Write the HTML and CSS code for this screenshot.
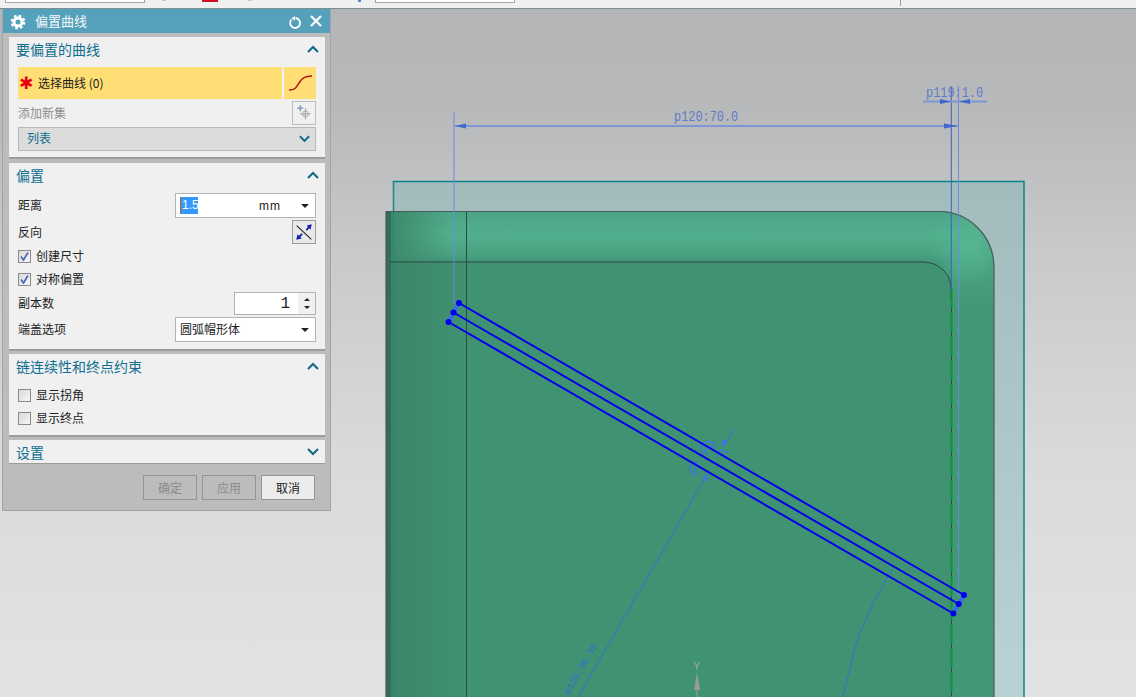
FILE: index.html
```html
<!DOCTYPE html>
<html lang="zh-CN">
<head>
<meta charset="utf-8">
<title>偏置曲线</title>
<link rel="stylesheet" href="styles.css">
</head>
<body>
<div class="app">
  <div class="toolbar">
    <span class="tb-field tb-field-a"></span>
    <span class="tb-speck tb-s1"></span>
    <span class="tb-red"></span>
    <span class="tb-speck tb-s2"></span>
    <span class="tb-blue"></span>
    <span class="tb-field tb-field-b"></span>
    <span class="tb-sep"></span>
  </div>
  <div class="viewport">
    <svg class="scene" viewBox="0 9 1136 688" width="1136" height="688" xmlns="http://www.w3.org/2000/svg">
      <defs>
        <linearGradient id="plateG" x1="0" y1="181" x2="0" y2="697" gradientUnits="userSpaceOnUse">
          <stop offset="0" stop-color="#a2bbbc"/><stop offset="1" stop-color="#b9d3d4"/>
        </linearGradient>
        <linearGradient id="topBand" x1="0" y1="212" x2="0" y2="262" gradientUnits="userSpaceOnUse">
          <stop offset="0" stop-color="#4ba585"/><stop offset=".45" stop-color="#52af8d"/><stop offset=".8" stop-color="#4aa483"/><stop offset="1" stop-color="#41957a"/>
        </linearGradient>
        <linearGradient id="rightBand" x1="0" y1="248" x2="0" y2="305" gradientUnits="userSpaceOnUse">
          <stop offset="0" stop-color="#4ca786"/><stop offset="1" stop-color="#429876"/>
        </linearGradient>
        <linearGradient id="leftCorner" x1="390" y1="0" x2="450" y2="0" gradientUnits="userSpaceOnUse">
          <stop offset="0" stop-color="#3d886b"/><stop offset="1" stop-color="#3d886b" stop-opacity="0"/>
        </linearGradient>
        <linearGradient id="leftBand" x1="390" y1="0" x2="467" y2="0" gradientUnits="userSpaceOnUse">
          <stop offset="0" stop-color="#3b8569"/><stop offset="1" stop-color="#3f9272"/>
        </linearGradient>
        <radialGradient id="cornerGlow" cx="968" cy="246" r="38" gradientUnits="userSpaceOnUse">
          <stop offset="0" stop-color="#56b592"/><stop offset="1" stop-color="#56b592" stop-opacity="0"/>
        </radialGradient>
        <clipPath id="bodyClip"><path d="M386 700V211H939A55 56 0 0 1 994 267V700Z"/></clipPath>
      </defs>

      <rect class="plate" x="393.500" y="181.500" width="630.500" height="530"/>

      <g clip-path="url(#bodyClip)">
        <rect x="386" y="211" width="608" height="490" fill="#429876"/>
        <rect x="386" y="211" width="608" height="51" fill="url(#topBand)"/>
        <rect x="951" y="248" width="43" height="57" fill="url(#rightBand)"/>
        <rect x="390" y="211" width="60" height="51" fill="url(#leftCorner)"/>
        <rect x="930" y="205" width="70" height="90" fill="url(#cornerGlow)"/>
        <rect x="390" y="262" width="77" height="440" fill="url(#leftBand)"/>
        <path d="M467 262H923A28 26 0 0 1 951 288V700H467Z" fill="#3f9272"/>
        <rect x="386" y="211" width="5" height="490" fill="#386b54"/>
      </g>

      <line class="teal" x1="393.500" y1="182" x2="393.500" y2="697"/>
      <path class="edge" d="M386 697V211.500H939A55 56 0 0 1 994 267V697"/>
      <path class="edge-thin" d="M390 262H923A28 26 0 0 1 951 288V300"/>
      <line class="edge-thin" x1="466.500" y1="212" x2="466.500" y2="697"/>
      <line class="edge-dark" x1="951.500" y1="288" x2="951.500" y2="697"/>
      <line class="edge-green" x1="951.500" y1="288" x2="951.500" y2="697"/>

      <line class="ext" x1="454" y1="112" x2="454" y2="304"/>
      <line class="ext ext-dark" x1="951.300" y1="86" x2="951.300" y2="290"/>
      <line class="ext" x1="958.500" y1="86" x2="958.500" y2="596"/>

      <line class="dim" x1="455" y1="126" x2="958" y2="126"/>
      <path class="arrow" d="M455 126L466 123.500V128.500Z"/>
      <path class="arrow" d="M958 126L944 123.500V128.500Z"/>
      <line class="dim" x1="923" y1="101.500" x2="987" y2="101.500"/>
      <path class="arrow" d="M951 101.500L940 99V104Z"/>
      <path class="arrow" d="M959 101.500L970 99V104Z"/>
      <text class="dim-text" transform="translate(674 121) scale(1 1.25)">p120:70.0</text>
      <text class="dim-text" transform="translate(926 97) scale(1 1.25)">p119:1.0</text>

      <line class="leader" x1="734" y1="430" x2="723" y2="447"/>
      <line class="leader" x1="708" y1="473" x2="578" y2="697"/>
      <path class="arrow-b" d="M722 447L722 439 728 442Z"/>
      <path class="arrow-b" d="M708 473L702 478 707 482Z"/>
      <path class="mark" d="M716 444C706 438 697 444 703 455"/>
      <path class="mark" d="M716 448C709 444 703 448 707 455"/>
      <path class="mark" d="M698 462C690 460 687 470 695 476"/>
      <path class="mark" d="M701 466C695 465 693 470 698 473"/>
      <path class="mark" d="M720 450L729 453M720 450L717 457"/>
      <path class="leader" d="M893 568C884 584 876 596 870 610C862 628 856 642 852 660C849 672 846 685 843 697"/>
      <text class="diag-text" transform="translate(569 695) rotate(-60)" x="0" y="0">p120:30.35</text>

      <line class="link" x1="459" y1="303" x2="448.500" y2="322"/>
      <line class="link" x1="964" y1="595" x2="953.300" y2="613.500"/>
      <line class="curve" x1="459" y1="303" x2="964" y2="595"/>
      <line class="curve" x1="453.500" y1="312.500" x2="958.700" y2="604"/>
      <line class="curve" x1="448.500" y1="322" x2="953.300" y2="613.500"/>
      <circle class="dot" cx="459" cy="303" r="3"/>
      <circle class="dot" cx="453.500" cy="312.500" r="3"/>
      <circle class="dot" cx="448.500" cy="322" r="3"/>
      <circle class="dot" cx="964" cy="595" r="3"/>
      <circle class="dot" cx="958.700" cy="604" r="3"/>
      <circle class="dot" cx="953.300" cy="613.500" r="3"/>

      <text class="triad-y" x="693.500" y="670">Y</text>
      <path class="triad" d="M697 672L700 690H694Z"/>
      <line class="triad-line" x1="697" y1="688" x2="697" y2="697"/>
    </svg>

    <section class="dialog">
      <header class="dialog-title">
        <svg class="gear" viewBox="0 0 16 16" width="16" height="16">
          <circle class="gear-ring" cx="8" cy="8" r="4"/>
          <circle class="gear-teeth" cx="8" cy="8" r="6.200"/>
        </svg>
        <span class="dialog-name">偏置曲线</span>
        <svg class="reset" viewBox="0 0 14 14" width="14" height="14">
          <path d="M3.400 3.600A5 5 0 1 0 7.500 2"/>
          <path class="fill-white" d="M7 0L7 4.600 3.400 2.400Z"/>
        </svg>
        <svg class="close" viewBox="0 0 14 14" width="14" height="14">
          <path d="M2 2L12 12M12 2L2 12"/>
        </svg>
      </header>

      <div class="dialog-body">
        <div class="panel panel-curve">
          <div class="panel-head">
            <span>要偏置的曲线</span>
            <svg class="chev" viewBox="0 0 12 8" width="12" height="8"><path d="M1 7L6 2 11 7"/></svg>
          </div>
          <div class="panel-body">
            <div class="pick-row">
              <div class="pick-main"><span class="req">✱</span><span class="lbl">选择曲线 (0)</span></div>
              <div class="pick-icon">
                <svg viewBox="0 0 28 20" width="28" height="20"><path class="s-curve" d="M3 17C9 17 10 15 13 10S19 3 26 3"/></svg>
              </div>
            </div>
            <div class="row row-24 muted">
              <span class="lbl">添加新集</span>
              <button class="icon-btn" type="button">
                <svg viewBox="0 0 24 24" width="22" height="22">
                  <path class="plus" d="M8 3.500V10M4.800 6.800H11.200"/>
                  <circle class="target" cx="13.500" cy="13" r="3.200"/>
                  <path class="target-line" d="M13.500 7V19M7.500 13H19.500"/>
                </svg>
              </button>
            </div>
            <div class="list-select">
              <span class="lbl lbl-list">列表</span>
              <svg class="chev chev-sm" viewBox="0 0 12 8" width="11" height="8"><path d="M1 1L6 6 11 1"/></svg>
            </div>
          </div>
        </div>

        <div class="panel panel-offset">
          <div class="panel-head">
            <span>偏置</span>
            <svg class="chev" viewBox="0 0 12 8" width="12" height="8"><path d="M1 7L6 2 11 7"/></svg>
          </div>
          <div class="panel-body">
            <div class="row row-25">
              <span class="lbl">距离</span>
              <div class="field field-wide">
                <span class="selected">1.5</span>
                <span class="unit">mm</span>
                <span class="tri"></span>
              </div>
            </div>
            <div class="row row-24">
              <span class="lbl">反向</span>
              <button class="icon-btn icon-btn-dark" type="button">
                <svg viewBox="0 0 24 24" width="22" height="22">
                  <path class="rev-line" d="M4 5L20 20"/>
                  <path class="rev-arrow" d="M5 19L10 14M14.500 10L19 5"/>
                  <path class="rev-head" d="M3.500 20.500L5 14.500 9.500 19ZM20.500 3.500L15 5 19 9.500Z"/>
                </svg>
              </button>
            </div>
            <label class="check row-21"><span class="box"><svg viewBox="0 0 11 11" width="11" height="11"><path d="M2 5.500L4.500 9 9 1.500"/></svg></span><span class="lbl">创建尺寸</span></label>
            <label class="check row-21"><span class="box"><svg viewBox="0 0 11 11" width="11" height="11"><path d="M2 5.500L4.500 9 9 1.500"/></svg></span><span class="lbl">对称偏置</span></label>
            <div class="row row-23">
              <span class="lbl">副本数</span>
              <div class="field field-spin">
                <span class="spin-value">1</span>
                <span class="spin"><span class="tri tri-up"></span><span class="tri tri-down"></span></span>
              </div>
            </div>
            <div class="row row-25">
              <span class="lbl">端盖选项</span>
              <div class="field field-wide">
                <span class="field-text lbl">圆弧帽形体</span>
                <span class="tri"></span>
              </div>
            </div>
          </div>
        </div>

        <div class="panel panel-chain">
          <div class="panel-head">
            <span>链连续性和终点约束</span>
            <svg class="chev" viewBox="0 0 12 8" width="12" height="8"><path d="M1 7L6 2 11 7"/></svg>
          </div>
          <div class="panel-body">
            <label class="check row-22"><span class="box"></span><span class="lbl">显示拐角</span></label>
            <label class="check row-20"><span class="box"></span><span class="lbl">显示终点</span></label>
          </div>
        </div>

        <div class="panel panel-settings">
          <div class="panel-head">
            <span>设置</span>
            <svg class="chev" viewBox="0 0 12 8" width="12" height="8"><path d="M1 1L6 6 11 1"/></svg>
          </div>
        </div>

        <footer class="dialog-actions">
          <button class="btn" type="button" disabled><span class="lbl">确定</span></button>
          <button class="btn" type="button" disabled><span class="lbl">应用</span></button>
          <button class="btn btn-on" type="button"><span class="lbl">取消</span></button>
        </footer>
      </div>
    </section>
  </div>
</div>
</body>
</html>
```

FILE: styles.css
```css
* { box-sizing: border-box; }
html, body { margin: 0; height: 100%; overflow: hidden; }
body { font-family: "Noto Sans CJK SC", "Liberation Sans", sans-serif; font-size: 12px; color: #222; }

.app { display: flex; flex-direction: column; width: 1136px; height: 697px; }

.toolbar { flex: 0 0 9px; display: flex; align-items: flex-start; background: #f0f0f0; border-bottom: 1px solid #7d8e8e; overflow: hidden; }
.tb-field { display: block; height: 3px; background: #fff; border: 1px solid #a5a5a5; border-top: 0; }
.tb-field-a { width: 140px; margin-left: 5px; }
.tb-speck { display: block; width: 4px; height: 1px; background: #c8c8c8; }
.tb-s1 { margin-left: 17px; margin-right: 36px; }
.tb-red { display: block; width: 16px; height: 2px; background: #d01020; }
.tb-s2 { margin-left: 30px; margin-right: 80px; }
.tb-blue { display: block; width: 3px; height: 2px; background: #6080d8; margin-left: 26px; margin-right: 14px; }
.tb-field-b { width: 140px; }
.tb-sep { display: block; width: 1px; height: 6px; background: #9a9a9a; margin-left: 385px; }

.viewport { position: relative; flex: 1; background: linear-gradient(#b4b5b7 0%, #b8b9bb 15%, #c8c9ca 35%, #d9dadb 65%, #e2e3e4 100%); overflow: hidden; }
.scene { display: block; position: absolute; left: 0; top: 0; }

.plate { fill: url(#plateG); stroke: #0b8583; stroke-width: 1.500; }
.teal { stroke: #1b8a85; stroke-width: 1; }
.edge { fill: none; stroke: #4a5c56; stroke-width: 1.200; }
.edge-thin { fill: none; stroke: #2c4a40; stroke-width: 1; }
.edge-dark { stroke: #2c4a40; stroke-width: 1; }
.edge-green { stroke: #12923f; stroke-width: 2; stroke-dasharray: 20 4; }
.ext { stroke: #6d8cd8; stroke-width: 1; }
.ext-dark { stroke: #3a62c8; }
.dim { stroke: #7f95d4; stroke-width: 2; }
.arrow { fill: #3f68cc; }
.arrow-b { fill: #3a78e0; }
.dim-text { font-family: "Liberation Mono", monospace; font-size: 11.900px; fill: #5f7cc8; }
.diag-text { font-family: "Liberation Mono", monospace; font-size: 9.500px; fill: #2d6fd8; }
.leader { fill: none; stroke: #2f72d8; stroke-width: 1; }
.mark { fill: none; stroke: #3a78dc; stroke-width: 1.600; }
.curve { stroke: #0000ee; stroke-width: 2; }
.link { stroke: #3a6ce8; stroke-width: 4; }
.dot { fill: #0000f0; }
.triad-y { font-family: "Liberation Sans", sans-serif; font-size: 10px; fill: #a8a8a8; }
.triad { fill: #9a9a9a; }
.triad-line { stroke: #9a9a9a; stroke-width: 1; }

.dialog { position: absolute; left: 2px; top: 0; width: 329px; height: 502px; display: flex; flex-direction: column; background: #bcbcbc; border: 1px solid #a3a3a3; border-top: 0; }
.dialog-title { flex: 0 0 24px; display: flex; align-items: center; background: #55a0bb; color: #fff; padding: 0 7px 0 7px; font-size: 13px; }
.dialog-name { margin-left: 9px; padding-bottom: 2px; flex: 1; color: #f4fafc; }
.gear { display: block; margin-top: 2px; }
.gear-ring { fill: none; stroke: #fff; stroke-width: 3; }
.gear-teeth { fill: none; stroke: #fff; stroke-width: 2.400; stroke-dasharray: 2.600 2.270; }
.reset { display: block; margin-right: 7px; margin-top: 4px; }
.reset path { fill: none; stroke: #fff; stroke-width: 1.800; }
.reset .fill-white { fill: #fff; stroke: none; }
.close { display: block; }
.close path { fill: none; stroke: #fff; stroke-width: 2.200; }

.dialog-body { flex: 1; display: flex; flex-direction: column; gap: 3px; padding: 4px 5px 0 6px; }
.panel { background: #f0f0f0; border-bottom: 2px solid #9c9c9c; overflow: hidden; }
.panel-curve { height: 122px; margin-bottom: 1px; }
.panel-offset { height: 188px; }
.panel-chain { height: 83px; }
.panel-settings { height: 24px; border-bottom-width: 1px; }

.panel-head { height: 26px; display: flex; align-items: center; justify-content: space-between; padding: 0 6px 2px 7px; font-size: 14px; color: #0f6f90; }
.chev { display: block; }
.chev path { fill: none; stroke: #0a6a88; stroke-width: 2; }
.chev-sm { margin-right: 0; }

.panel-body { display: flex; flex-direction: column; gap: 2px; padding: 4px 9px 0; }

.lbl { padding-bottom: 2px; }
.lbl-list { padding-bottom: 3px; }

.pick-row { display: flex; gap: 2px; height: 32px; }
.pick-main { flex: 1; display: flex; align-items: center; background: #ffde75; color: #1c1c1c; }
.req { width: 20px; padding-left: 1px; margin-right: 0; text-align: left; color: #e8000c; font-size: 17px; line-height: 1; font-family: "DejaVu Sans", sans-serif; font-weight: 700; }
.pick-icon { width: 32px; display: flex; align-items: center; justify-content: center; background: #ffde75; }
.s-curve { fill: none; stroke: #b01818; stroke-width: 1.500; }

.row { display: flex; align-items: center; justify-content: space-between; }
.row-20 { height: 20px; }
.row-21 { height: 21px; }
.row-22 { height: 22px; }
.row-23 { height: 23px; }
.row-24 { height: 24px; }
.row-25 { height: 25px; }
.muted { color: #8e8e8e; }

.icon-btn { width: 24px; height: 24px; padding: 0; display: flex; align-items: center; justify-content: center; background: #f0f0f0; border: 1px solid #bdbdbd; }
.icon-btn-dark { background: #e9e9e9; border-color: #9a9a9a; }
.plus { fill: none; stroke: #8c9cc0; stroke-width: 1.800; }
.target { fill: none; stroke: #b89a9a; stroke-width: 1; }
.target-line { fill: none; stroke: #9a9a9a; stroke-width: 1; }
.rev-line { fill: none; stroke: #222; stroke-width: 1.200; }
.rev-arrow { fill: none; stroke: #1020b0; stroke-width: 2; }
.rev-head { fill: #1020b0; }

.list-select { height: 24px; display: flex; align-items: center; justify-content: space-between; padding: 0 5px 0 8px; background: #dcdcdc; border: 1px solid #b8b8b8; color: #0f6f90; }

.field { position: relative; display: flex; align-items: center; background: #fff; border: 1px solid #b3b3b3; height: 100%; }
.field-wide { width: 141px; padding: 0 6px 0 4px; }
.field-spin { width: 82px; }
.selected { background: #3399ff; color: #fff; padding: 0 0 0 1px; height: 17px; line-height: 17px; width: 18px; border-left: 1px solid #c06010; font-family: "Liberation Sans", sans-serif; font-size: 12px; }
.unit { margin-left: auto; margin-right: 20px; letter-spacing: 1px; font-family: "Liberation Sans", sans-serif; font-size: 12px; }
.field-text { flex: 1; }
.tri { display: block; width: 0; height: 0; border-left: 4px solid transparent; border-right: 4px solid transparent; border-top: 4px solid #222; }
.tri-up { border-top: 0; border-bottom: 3px solid #222; border-left-width: 3px; border-right-width: 3px; }
.tri-down { border-top-width: 3px; border-left-width: 3px; border-right-width: 3px; }
.spin-value { flex: 1; text-align: right; padding-right: 8px; font-size: 16px; font-family: "Liberation Mono", monospace; background: #fff; }
.spin { width: 17px; height: 100%; display: flex; flex-direction: column; align-items: center; justify-content: space-between; padding: 5px 0; background: #f0f0f0; }

.check { display: flex; align-items: center; gap: 5px; }
.box { width: 13px; height: 13px; display: flex; align-items: center; justify-content: center; background: linear-gradient(135deg, #d8d8d8, #f6f6f6); border: 1px solid #8a8a8a; }
.box path { fill: none; stroke: #4a62b8; stroke-width: 1.600; }

.dialog-actions { display: flex; justify-content: flex-end; gap: 5px; padding: 8px 10px 0 0; }
.btn { width: 54px; height: 25px; padding: 0; font: inherit; background: #bcbcbc; border: 1px solid #949494; color: #8a8a8a; }
.btn-on { background: #ececec; color: #222; }
```
